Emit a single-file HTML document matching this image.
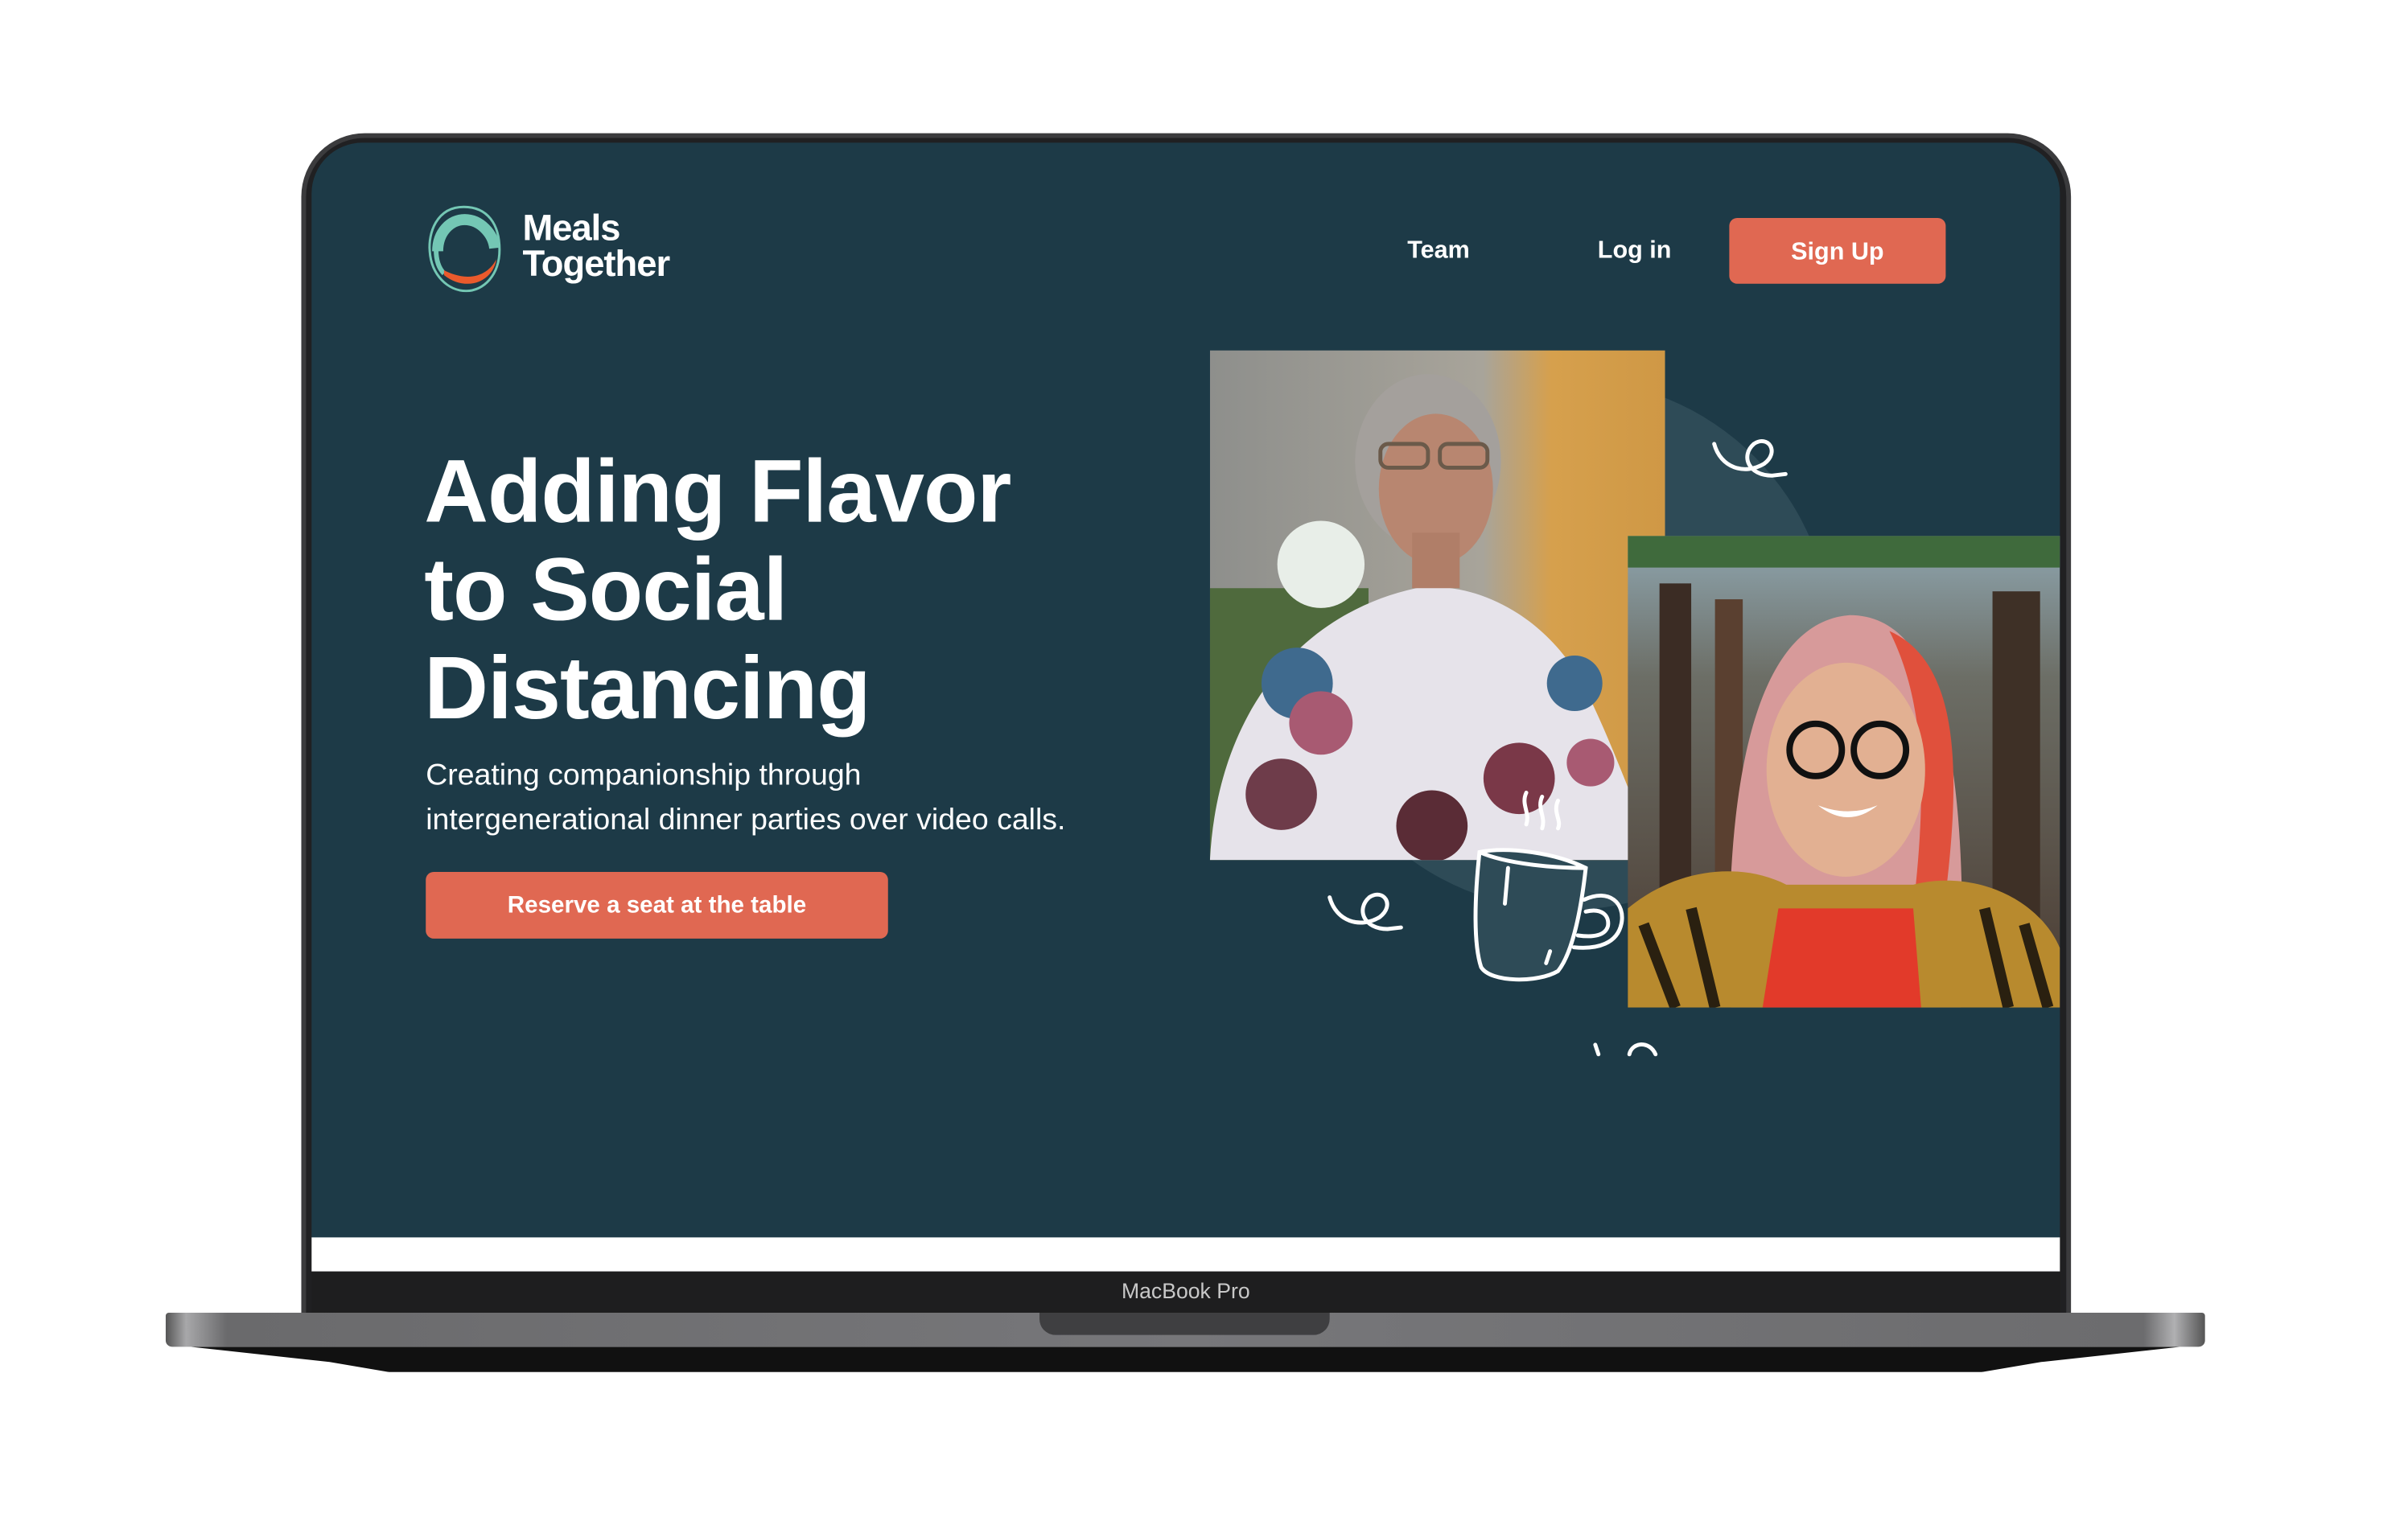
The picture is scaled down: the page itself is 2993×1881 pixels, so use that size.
<!DOCTYPE html>
<html><head><meta charset="utf-8">
<style>
html,body{margin:0;padding:0;background:#fff;}
body{width:2993px;height:1881px;position:relative;overflow:hidden;font-family:"Liberation Sans",sans-serif;}
#wrap{position:absolute;left:0;top:0;width:2993px;height:1881px;transform:scale(0.9855);transform-origin:0 0;}
.abs{position:absolute;}
#lid{left:380px;top:168px;width:2232px;height:1500px;background:#3b3b3d;border-radius:80px 80px 0 0;}
#lid2{left:386px;top:174px;width:2220px;height:1494px;background:#202022;border-radius:74px 74px 0 0;}
#screen{left:393px;top:180px;width:2205px;height:1382px;background:#1d3a47;border-radius:64px 64px 0 0;overflow:hidden;}
#white{left:393px;top:1561px;width:2205px;height:43px;background:#fff;}
#chin{left:393px;top:1604px;width:2205px;height:52px;background:#1e1e1f;}
#mbp{left:393px;top:1614px;width:2205px;text-align:center;color:#c8c8c8;font-size:27px;}
#base{left:209px;top:1656px;width:2572px;height:43px;background:linear-gradient(90deg,#555 0%,#a8a8aa 1%,#6a6a6c 3%,#77777a 50%,#6c6c6e 97%,#b0b0b2 98.5%,#555 100%);border-radius:4px 4px 8px 8px;}
#foot{left:240px;top:1699px;width:2510px;height:32px;background:#111;clip-path:polygon(0 0,100% 0,93% 60%,90% 100%,10% 100%,7% 60%);}
#notch{left:1311px;top:1656px;width:366px;height:28px;background:#3f3f41;border-radius:0 0 20px 20px;}
.nav{color:#fff;font-weight:bold;font-size:31px;top:297px;}
.btn{background:#e06852;color:#fff;font-weight:bold;border-radius:10px;text-align:center;}
</style></head><body>
<div id="wrap">
<div id="lid" class="abs"></div>
<div id="lid2" class="abs"></div>
<div id="screen" class="abs">
  <svg class="abs" style="left:0;top:0" width="2205" height="1384">
    <circle cx="1583" cy="633" r="335" fill="#2e4b57"/>
  </svg>
</div>
<svg class="abs" style="left:530px;top:255px" width="110" height="120" viewBox="0 0 110 120">
  <path d="M55 6 C20 6 10 40 12 62 C14 92 35 112 58 112 C80 112 100 92 100 60 C100 28 85 6 55 6Z" fill="none" stroke="#74c7b4" stroke-width="3"/>
  <path d="M22 62 C22 38 38 22 56 22 C76 22 92 40 94 58" fill="none" stroke="#74c7b4" stroke-width="14"/>
  <path d="M20 60 C20 75 24 84 30 90" fill="none" stroke="#74c7b4" stroke-width="6"/>
  <path d="M30 92 C40 100 50 103 60 103 C80 103 94 88 96 72 C90 84 78 94 60 94 C48 94 38 90 30 86Z" fill="#ea5a2c"/>
</svg>
<div class="abs" style="left:659px;top:265px;color:#fff;font-weight:bold;font-size:46px;line-height:45px;letter-spacing:-1px">Meals<br>Together</div>
<div class="abs nav" style="left:1775px">Team</div>
<div class="abs nav" style="left:2015px">Log in</div>
<div class="abs btn" style="left:2181px;top:275px;width:273px;height:83px;line-height:83px;font-size:31px">Sign Up</div>
<div class="abs" style="left:535px;top:558px;color:#fff;font-weight:bold;font-size:112px;line-height:124px;letter-spacing:-1px">Adding Flavor<br>to Social<br>Distancing</div>
<div class="abs" style="left:537px;top:950px;color:#fff;font-size:38px;line-height:56px">Creating companionship through<br>intergenerational dinner parties over video calls.</div>
<div class="abs btn" style="left:537px;top:1100px;width:583px;height:84px;line-height:84px;font-size:30px">Reserve a seat at the table</div>
<svg class="abs" style="left:1526px;top:442px" width="574" height="643" viewBox="0 0 574 643">
  <defs><linearGradient id="bg1" x1="0" x2="1"><stop offset="0" stop-color="#8e8f8c"/><stop offset=".6" stop-color="#a8a49a"/><stop offset=".75" stop-color="#d6a04d"/><stop offset="1" stop-color="#cf9845"/></linearGradient></defs>
  <rect width="574" height="643" fill="url(#bg1)"/>
  <rect x="0" y="300" width="200" height="343" fill="#4f6a3d"/>
  <circle cx="140" cy="270" r="55" fill="#e8eee8"/>
  <path d="M0 643 C10 450 120 330 260 300 C330 290 420 330 470 420 C520 520 540 600 574 643Z" fill="#e6e3ea"/>
  <circle cx="110" cy="420" r="45" fill="#3f6a8e"/><circle cx="140" cy="470" r="40" fill="#a85a72"/>
  <circle cx="90" cy="560" r="45" fill="#6e3c4a"/><circle cx="460" cy="420" r="35" fill="#3f6a8e"/>
  <circle cx="390" cy="540" r="45" fill="#7a3848"/><circle cx="280" cy="600" r="45" fill="#5a2c36"/>
  <circle cx="480" cy="520" r="30" fill="#a85a72"/>
  <ellipse cx="275" cy="140" rx="92" ry="110" fill="#a4a09c"/>
  <ellipse cx="285" cy="175" rx="72" ry="95" fill="#b88670"/>
  <rect x="255" y="230" width="60" height="70" fill="#b07e68"/>
  <rect x="215" y="118" width="60" height="30" rx="10" fill="none" stroke="#6b5a4a" stroke-width="5"/>
  <rect x="290" y="118" width="60" height="30" rx="10" fill="none" stroke="#6b5a4a" stroke-width="5"/>
</svg>
<svg class="abs" style="left:2053px;top:676px" width="545" height="595" viewBox="0 0 545 595">
  <defs><linearGradient id="bg2" y1="0" y2="1" x1="0" x2="0"><stop offset="0" stop-color="#8fa6b0"/><stop offset=".3" stop-color="#6c6e66"/><stop offset="1" stop-color="#4a3a30"/></linearGradient></defs>
  <rect width="545" height="595" fill="url(#bg2)"/>
  <rect x="0" y="0" width="545" height="40" fill="#3f6a3c"/>
  <rect x="40" y="60" width="40" height="440" fill="#3b2c24"/><rect x="110" y="80" width="35" height="420" fill="#5a4030"/>
  <rect x="460" y="70" width="60" height="450" fill="#3e3026"/>
  <path d="M130 595 C120 350 150 110 280 100 C400 100 430 300 420 595Z" fill="#d79a9a"/>
  <path d="M330 120 C420 160 420 300 400 460 L360 470 C380 300 370 200 330 120Z" fill="#e0503c"/>
  <ellipse cx="275" cy="295" rx="100" ry="135" fill="#e2b092"/>
  <circle cx="237" cy="270" r="33" fill="none" stroke="#111" stroke-width="8"/>
  <circle cx="318" cy="270" r="33" fill="none" stroke="#111" stroke-width="8"/>
  <path d="M240 340 Q278 370 315 340 Q278 355 240 340Z" fill="#fff"/>
  <path d="M0 595 L0 470 C60 420 140 410 200 440 L360 440 C440 420 520 460 545 520 L545 595Z" fill="#b88a2e"/>
  <path d="M170 595 L190 470 L360 470 L370 595Z" fill="#e23a2a"/>
  <path d="M20 490 L60 595 M80 470 L110 595 M450 470 L480 595 M500 490 L530 595" stroke="#2a2010" stroke-width="14"/>
</svg>
<svg class="abs" style="left:0;top:0" width="2993" height="1881" fill="none" stroke="#fff" stroke-width="5" stroke-linecap="round">
  <path d="M2162 560 C2170 590 2200 600 2225 585 C2245 570 2230 548 2212 560 C2195 575 2205 600 2235 600 L2252 598"/>
  <path d="M1677 1132 C1685 1162 1715 1172 1740 1157 C1760 1142 1745 1120 1727 1132 C1710 1147 1720 1172 1750 1172 L1767 1170"/>
  <path d="M1866 1075 C1860 1130 1858 1190 1868 1220 C1880 1240 1940 1240 1965 1225 C1985 1200 1995 1140 2000 1095 C1960 1075 1900 1068 1866 1075Z" fill="#2e4b57"/>
  <path d="M1866 1075 C1900 1090 1960 1095 2000 1095"/>
  <path d="M1998 1135 C2030 1120 2050 1140 2045 1165 C2040 1190 2015 1198 1985 1195"/>
  <path d="M2000 1150 C2020 1145 2030 1155 2028 1168 C2025 1180 2010 1183 1990 1180"/>
  <path d="M1902 1095 L1898 1140 M1955 1200 L1950 1215 M1925 1000 C1918 1015 1930 1025 1925 1040 M1945 1005 C1938 1020 1950 1030 1945 1045 M1965 1010 C1958 1025 1970 1035 1965 1045"/>
  <path d="M2012 1318 L2016 1330 M2055 1330 C2058 1315 2080 1312 2088 1330"/>
</svg>
<div id="white" class="abs"></div>
<div id="chin" class="abs"></div>
<div id="mbp" class="abs">MacBook Pro</div>
<div id="base" class="abs"></div>
<div id="foot" class="abs"></div>
<div id="notch" class="abs"></div>
</div>
</body></html>
